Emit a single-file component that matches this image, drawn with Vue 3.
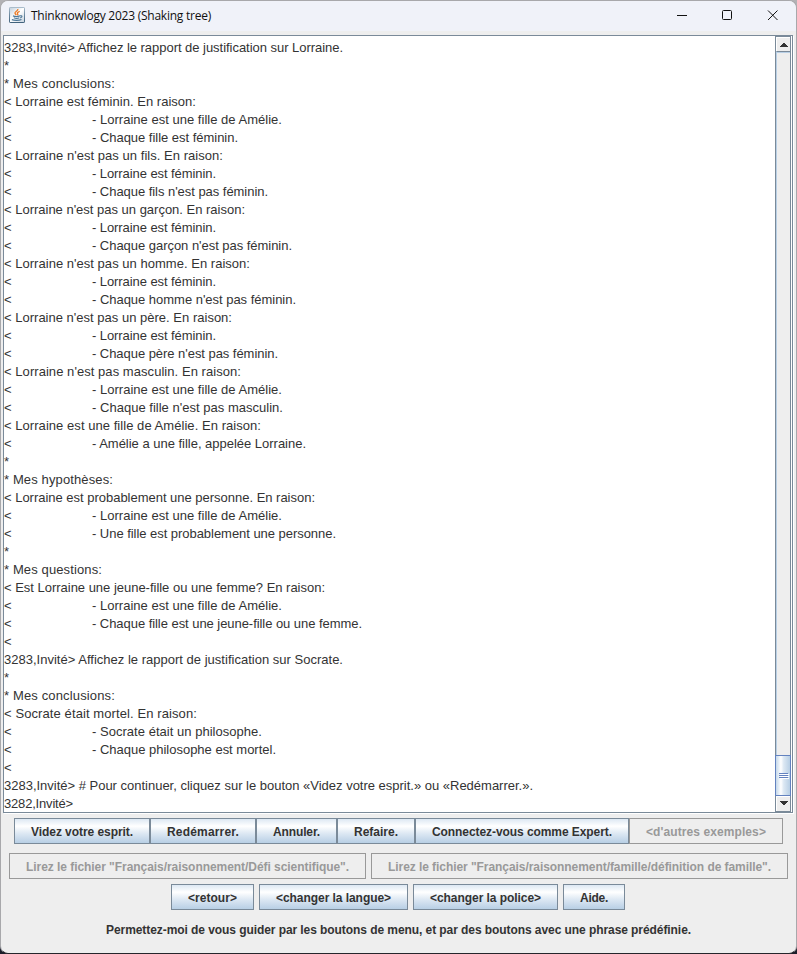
<script setup>
const raw = `3283,Invité> Affichez le rapport de justification sur Lorraine.|343
*
* Mes conclusions:|115
< Lorraine est féminin. En raison:|196
-Lorraine est une fille de Amélie.|282
-Chaque fille est féminin.|238
< Lorraine n'est pas un fils. En raison:|223
-Lorraine est féminin.|216
-Chaque fils n'est pas féminin.|268
< Lorraine n'est pas un garçon. En raison:|245
-Lorraine est féminin.|216
-Chaque garçon n'est pas féminin.|292
< Lorraine n'est pas un homme. En raison:|250
-Lorraine est féminin.|216
-Chaque homme n'est pas féminin.|296
< Lorraine n'est pas un père. En raison:|232
-Lorraine est féminin.|216
-Chaque père n'est pas féminin.|278
< Lorraine n'est pas masculin. En raison:|241
-Lorraine est une fille de Amélie.|282
-Chaque fille n'est pas masculin.|283
< Lorraine est une fille de Amélie. En raison:|261
-Amélie a une fille, appelée Lorraine.|306
*
* Mes hypothèses:|113
< Lorraine est probablement une personne. En raison:|315
-Lorraine est une fille de Amélie.|282
-Une fille est probablement une personne.|336
*
* Mes questions:|102
< Est Lorraine une jeune-fille ou une femme? En raison:|325
-Lorraine est une fille de Amélie.|282
-Chaque fille est une jeune-fille ou une femme.|362
<
3283,Invité> Affichez le rapport de justification sur Socrate.|343
*
* Mes conclusions:|115
< Socrate était mortel. En raison:|197
-Socrate était un philosophe.|262
-Chaque philosophe est mortel.|276
<
3283,Invité> # Pour continuer, cliquez sur le bouton «Videz votre esprit.» ou «Redémarrer.».|533
3282,Invité>|73`
const lines = raw.split('\n').map(l => {
  const [t, end] = l.split('|')
  const sub = t.startsWith('-')
  return { sub, text: sub ? '- ' + t.slice(1) : t, width: end ? end - (sub ? 92 : 4) : null }
})
const menu = [
  { label: 'Videz votre esprit.', w: 136 },
  { label: 'Redémarrer.', w: 106 },
  { label: 'Annuler.', w: 81 },
  { label: 'Refaire.', w: 78 },
  { label: 'Connectez-vous comme Expert.', w: 214 },
  { label: "<d'autres exemples>", w: 154, off: true }
]
const files = [
  { label: 'Lirez le fichier "Français/raisonnement/Défi scientifique".', w: 357, off: true },
  { label: 'Lirez le fichier "Français/raisonnement/famille/définition de famille".', w: 417, off: true }
]
const tools = [
  { label: '<retour>', w: 83 },
  { label: '<changer la langue>', w: 149 },
  { label: '<changer la police>', w: 145 },
  { label: 'Aide.', w: 62 }
]
const rows = [
  { cls: 'menu', items: menu },
  { cls: 'files', items: files },
  { cls: 'tools', items: tools }
]
// Justifies a run of text to a fixed advance by adjusting its letter spacing
const vFit = (el, { value }) => {
  if (!value) return
  el.style.letterSpacing = '0px'
  const natural = el.getBoundingClientRect().width
  el.style.letterSpacing = (value - natural) / el.textContent.length + 'px'
}
</script>

<template>
  <div class="desktop">
    <div class="window">
      <header class="titlebar">
        <svg class="java" viewBox="0 0 16 16">
          <defs>
            <linearGradient id="jb" x1="0" y1="0" x2="0" y2="1">
              <stop offset="0" stop-color="#a9bccb" /><stop offset=".5" stop-color="#6b889f" /><stop offset="1" stop-color="#41627c" />
            </linearGradient>
            <linearGradient id="jf" x1="0" y1="0" x2="1" y2="1">
              <stop offset="0" stop-color="#c3d0dc" /><stop offset=".5" stop-color="#fff" /><stop offset="1" stop-color="#c3d0dc" />
            </linearGradient>
          </defs>
          <rect x=".5" y=".5" width="15" height="15" rx=".6" fill="url(#jf)" stroke="url(#jb)" />
          <path d="M8.800 2C9.500 4 5.400 4.500 6 6.300c.2.700.9 1.100 1.300 1.900M10.700 4.300C8.800 5 7.900 5.900 8.600 6.700c.5.6.4 1-.2 1.500" fill="none" stroke="#ee7a24" stroke-width="1.350" />
          <path d="M4 8.900c1.500.6 5 .6 6.800 0M4.800 10.700c1.500.6 4.200.6 5.500 0M2.800 12.600c2.500 1.100 7.300 1 9.700-.1M10.900 8.900c2.700-.8 2.700 1.400.2 2.100" fill="none" stroke="#4f7898" stroke-width="1.200" />
        </svg>
        <h1><span v-fit="180">Thinknowlogy 2023 (Shaking tree)</span></h1>
        <svg class="controls" viewBox="0 0 106 16" fill="none" stroke="#111">
          <path d="M3 7.5h10" />
          <rect x="48.500" y="2.500" width="9" height="9" rx="1" />
          <path d="M94 2.500l9.500 9.500M103.500 2.500L94 12" />
        </svg>
      </header>

      <main class="console">
        <div class="log">
          <p v-for="(l, i) in lines" :key="i">
            <i v-if="l.sub" class="lead">&lt;</i><span v-fit="l.width">{{ l.text }}</span>
          </p>
        </div>
        <div class="scroll">
          <div class="arrow up"><svg viewBox="0 0 8 4"><path d="M3 0h2v1h1v1h1v1h1v1H0V3h1V2h1V1h1z" /></svg></div>
          <div class="track"></div>
          <div class="thumb"><b></b><b></b><b></b></div>
          <div class="arrow down"><svg viewBox="0 0 8 4"><path d="M0 0h8v1H7v1H6v1H5v1H3V3H2V2H1V1H0z" /></svg></div>
        </div>
      </main>

      <nav v-for="r in rows" :key="r.cls" :class="r.cls">
        <button v-for="b in r.items" :key="b.label" :class="{ off: b.off }" :style="{ width: b.w + 'px' }" :disabled="b.off">
          <span v-fit="b.w - 34">{{ b.label }}</span>
        </button>
      </nav>
      <footer><span v-fit="585">Permettez-moi de vous guider par les boutons de menu, et par des boutons avec une phrase prédéfinie.</span></footer>
    </div>
  </div>
</template>

<style>
body { margin: 0; overflow: hidden; }
</style>
<style scoped>
* { box-sizing: border-box; }
.desktop { width: 797px; height: 954px; background: linear-gradient(#b3b2b5 0 840px, #1c1e2a 842px); font-family: "Liberation Sans", Arial, sans-serif; }
.window { width: 797px; height: 954px; border: 1px solid #a8a8ab; border-bottom-color: #25252b; border-radius: 8px; background: #eee; overflow: hidden; display: flex; flex-direction: column; }
.titlebar { height: 30px; flex: none; background: #f0f2f9; display: flex; align-items: center; padding: 0 16px 0 8px; }
.java { width: 16px; height: 16px; position: relative; top: -1px; }
h1 { margin: 0 0 0 6px; flex: 1; font: 12px/16px "Open Sans", sans-serif; color: #111; white-space: nowrap; }
.controls { width: 106px; height: 16px; }
.console { margin: 4px 2px 0; height: 778px; width: 790px; flex: none; display: flex; border: 1px solid #7a8a99; background: #fff; box-shadow: 1px 1px 0 #fff; }
.log { flex: 1; height: 776px; padding-top: 3px; color: #333; font-size: 13px; }
p { margin: 0; height: 18px; line-height: 18px; white-space: nowrap; display: flex; }
.lead { font-style: normal; width: 88px; }
.scroll { width: 16px; height: 776px; margin-right: 1px; border: 1px solid #7a8a99; background: #eee; display: flex; flex-direction: column; }
.arrow { height: 14px; flex: none; display: flex; align-items: center; justify-content: center; border-top: 1px solid #fff; border-left: 1px solid #fff; }
.arrow svg { width: 8px; height: 4px; fill: #333; }
.arrow.down { height: 15px; padding-bottom: 2px; }
.track { flex: 1; border-top: 1px solid #7a8a99; border-left: 1px solid #b8cfe5; box-shadow: inset 0 1px #b8cfe5; }
.thumb { height: 41px; flex: none; margin: 0 -1px; border: 1px solid #6382bf; background: linear-gradient(90deg, #c4d8eb, #fff 35%, #dce8f3 55%, #b8cfe5); display: flex; flex-direction: column; align-items: center; justify-content: center; gap: 1px; }
.thumb b { width: 9px; height: 1px; background: #6382bf; box-shadow: 1px 1px #fff; }
nav { display: flex; flex: none; height: 26px; }
.menu { margin: 5px 0 0 13px; }
.files { margin: 9px 0 0 8px; gap: 5px; }
.tools { margin: 5px 0 0 170px; gap: 5px; }
button { flex: none; height: 26px; padding: 1px 0 0; border: 1px solid #7a8a99; background: linear-gradient(#dde8f3, #fff 30%, #dde8f3 60%, #b8cfe5); color: #333; font: bold 12px/24px "Liberation Sans", Arial, sans-serif; white-space: nowrap; display: flex; justify-content: center; }
button.off { color: #999; border-color: #999; background: #eee; }
footer { margin-top: 12px; padding-left: 105px; font-size: 12px; font-weight: bold; line-height: 16px; color: #333; white-space: nowrap; }
</style>
